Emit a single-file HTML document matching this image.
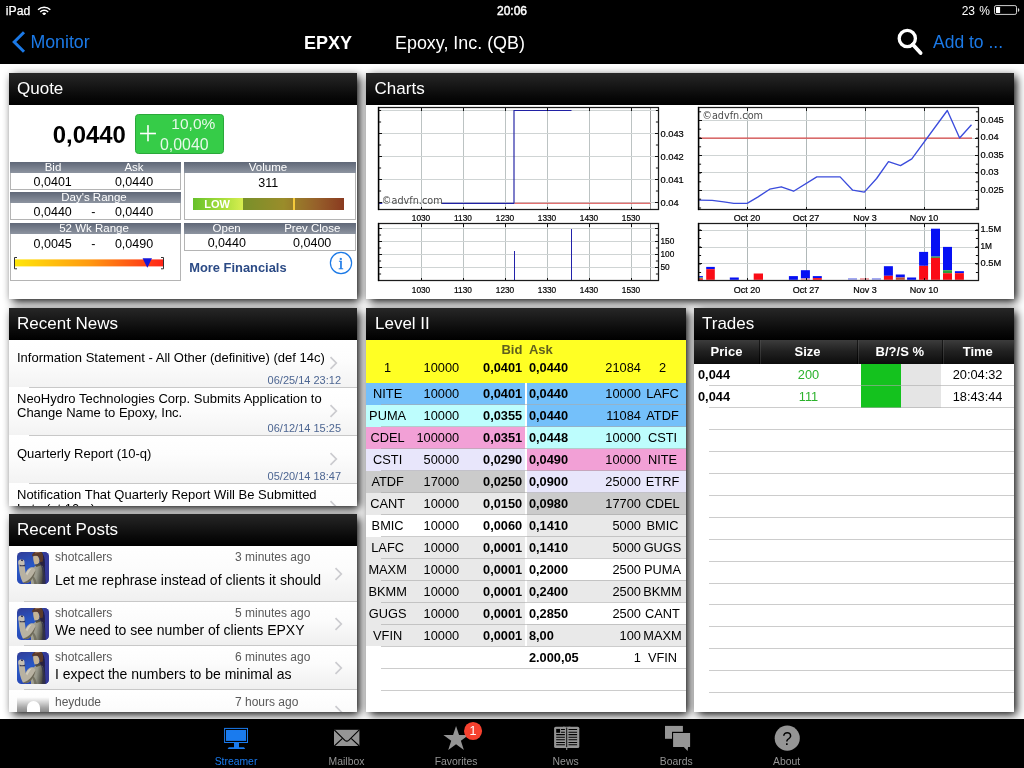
<!DOCTYPE html><html><head><meta charset="utf-8"><title>EPXY Streamer</title><style>
*{margin:0;padding:0;box-sizing:border-box}
html,body{width:1024px;height:768px;overflow:hidden;background:#fff}
body{position:relative;font-family:"Liberation Sans",sans-serif;font-size:13px;color:#000}
.t{position:absolute;white-space:nowrap}
.abs{position:absolute}
#wrap{position:absolute;left:0;top:0;width:1024px;height:768px;will-change:transform}
#top{position:absolute;left:0;top:0;width:1024px;height:64px;background:#000}
#tab{position:absolute;left:0;top:719px;width:1024px;height:49px;background:#000}
.panel{position:absolute;background:#fff;box-shadow:3.3px 3.3px 9px rgba(0,0,0,1);overflow:hidden}
.ph{position:absolute;left:0;top:0;right:0;height:32px;background:linear-gradient(#272727,#0a0a0a 70%,#000);color:#fff;font-size:17px;line-height:31px;padding-left:8px}
.gbar{position:absolute;height:11px;background:linear-gradient(#5f6777,#8d94a0)}
.vbox{position:absolute;border:1px solid #b4b4b4;border-top:none;background:#fff}
.row{position:absolute;left:0;right:0}
.sep{position:absolute;height:1px;background:#c8c8c8;right:0}
</style></head><body><div id="wrap">
<div id="top">
<div class="t" style="top:2.50px;line-height:16px;height:16px;font-size:12.2px;color:#fff;left:5.80px;-webkit-text-stroke:.25px #fff;">iPad</div>
<svg class="abs" style="left:36.8px;top:5.6px" width="14.4" height="9.9" viewBox="0 0 16 11"><g fill="none" stroke="#fff" stroke-width="1.6" stroke-linecap="butt"><path d="M1.2 4.2 A9.5 9.5 0 0 1 14.8 4.2"/><path d="M3.6 6.6 A6.2 6.2 0 0 1 12.4 6.6"/></g><path d="M8 10.6 L5.7 8.3 A3.2 3.2 0 0 1 10.3 8.3 Z" fill="#fff"/></svg>
<div class="t" style="top:2.50px;line-height:16px;height:16px;font-size:12px;color:#fff;left:312.00px;width:400px;text-align:center;-webkit-text-stroke:.45px #fff;">20:06</div>
<div class="t" style="top:2.50px;line-height:16px;height:16px;font-size:12px;color:#fff;left:590.00px;width:400px;text-align:right;word-spacing:1px;">23 %</div>
<svg class="abs" style="left:993px;top:4px" width="28" height="12" viewBox="0 0 28 12"><rect x="1.5" y="1.6" width="22" height="8.8" rx="1.6" fill="none" stroke="#d0d0d0" stroke-width="1"/><rect x="3" y="3" width="4.1" height="6" rx=".5" fill="#fff"/><path d="M24.9 4v4a2.1 2.1 0 0 0 0-4z" fill="#d8d8d8"/></svg>
<svg class="abs" style="left:11px;top:30px" width="16" height="24" viewBox="0 0 16 24"><path d="M13 2.2 L3.2 12 L13 21.8" fill="none" stroke="#1b79e6" stroke-width="3"/></svg>
<div class="t" style="top:31.10px;line-height:23px;height:23px;font-size:17.8px;color:#1b79e6;left:30.40px;">Monitor</div>
<div class="t" style="top:31.60px;line-height:23px;height:23px;font-size:18px;color:#fff;font-weight:bold;left:304.00px;">EPXY</div>
<div class="t" style="top:31.60px;line-height:23px;height:23px;font-size:17.9px;color:#fff;left:395.00px;">Epoxy, Inc. (QB)</div>
<svg class="abs" style="left:895px;top:27px" width="30" height="30" viewBox="0 0 30 30"><circle cx="12.3" cy="11.5" r="8.1" fill="none" stroke="#fff" stroke-width="3.3"/><path d="M17.8 17.5L25.6 26" stroke="#fff" stroke-width="3.8" stroke-linecap="round"/></svg>
<div class="t" style="top:31.10px;line-height:23px;height:23px;font-size:17.5px;color:#1b79e6;left:933.00px;">Add to ...</div>
</div>
<div class="panel" id="quote" style="left:9px;top:73px;width:348px;height:226px"><div class="ph">Quote</div>
<div class="t" style="top:45.70px;line-height:31px;height:31px;font-size:23.9px;color:#000;font-weight:bold;left:43.80px;">0,0440</div>
<div class="abs" style="left:126px;top:41px;width:89px;height:40px;background:#36cc48;border:1px solid #2aa83a;border-radius:3.5px"></div>
<div class="t" style="left:128.5px;top:45.3px;font-family:'DejaVu Sans Light','DejaVu Sans',sans-serif;font-weight:200;font-size:25px;line-height:30px;height:30px;color:#fff;-webkit-text-stroke:.3px #fff">+</div>
<div class="t" style="top:40.80px;line-height:20px;height:20px;font-size:15.5px;color:rgba(255,255,255,.88);left:-193.70px;width:400px;text-align:right;">10,0%</div>
<div class="t" style="top:60.90px;line-height:21px;height:21px;font-size:15.9px;color:rgba(255,255,255,.88);left:-200.40px;width:400px;text-align:right;">0,0040</div>
<div class="vbox" style="left:1px;top:99px;width:171px;height:18px"></div>
<div class="gbar" style="left:1px;top:89px;width:171px"></div>
<div class="vbox" style="left:1px;top:129px;width:171px;height:18px"></div>
<div class="gbar" style="left:1px;top:119px;width:171px"></div>
<div class="vbox" style="left:1px;top:160px;width:171px;height:48px"></div>
<div class="gbar" style="left:1px;top:150px;width:171px"></div>
<div class="vbox" style="left:175px;top:99px;width:172px;height:48px"></div>
<div class="gbar" style="left:175px;top:89px;width:172px"></div>
<div class="vbox" style="left:175px;top:160px;width:172px;height:18px"></div>
<div class="gbar" style="left:175px;top:150px;width:172px"></div>
<div class="t" style="top:86.80px;line-height:15px;height:15px;font-size:11.5px;color:#fff;left:-156.00px;width:400px;text-align:center;">Bid</div>
<div class="t" style="top:86.80px;line-height:15px;height:15px;font-size:11.5px;color:#fff;left:-75.00px;width:400px;text-align:center;">Ask</div>
<div class="t" style="top:116.80px;line-height:15px;height:15px;font-size:11.5px;color:#fff;left:-115.00px;width:400px;text-align:center;">Day's Range</div>
<div class="t" style="top:147.80px;line-height:15px;height:15px;font-size:11.5px;color:#fff;left:-115.00px;width:400px;text-align:center;">52 Wk Range</div>
<div class="t" style="top:86.80px;line-height:15px;height:15px;font-size:11.5px;color:#fff;left:59.00px;width:400px;text-align:center;">Volume</div>
<div class="t" style="top:147.80px;line-height:15px;height:15px;font-size:11.5px;color:#fff;left:17.70px;width:400px;text-align:center;">Open</div>
<div class="t" style="top:147.80px;line-height:15px;height:15px;font-size:11.5px;color:#fff;left:103.30px;width:400px;text-align:center;">Prev Close</div>
<div class="t" style="top:100.60px;line-height:16px;height:16px;font-size:12.5px;color:#000;left:-156.30px;width:400px;text-align:center;">0,0401</div>
<div class="t" style="top:100.60px;line-height:16px;height:16px;font-size:12.5px;color:#000;left:-75.00px;width:400px;text-align:center;">0,0440</div>
<div class="t" style="top:130.70px;line-height:16px;height:16px;font-size:12.5px;color:#000;left:-156.30px;width:400px;text-align:center;">0,0440</div>
<div class="t" style="top:130.70px;line-height:16px;height:16px;font-size:12.5px;color:#000;left:-115.60px;width:400px;text-align:center;">-</div>
<div class="t" style="top:130.70px;line-height:16px;height:16px;font-size:12.5px;color:#000;left:-75.00px;width:400px;text-align:center;">0,0440</div>
<div class="t" style="top:162.50px;line-height:16px;height:16px;font-size:12.5px;color:#000;left:-156.30px;width:400px;text-align:center;">0,0045</div>
<div class="t" style="top:162.50px;line-height:16px;height:16px;font-size:12.5px;color:#000;left:-115.60px;width:400px;text-align:center;">-</div>
<div class="t" style="top:162.50px;line-height:16px;height:16px;font-size:12.5px;color:#000;left:-75.00px;width:400px;text-align:center;">0,0490</div>
<div class="t" style="top:101.50px;line-height:16px;height:16px;font-size:12.5px;color:#000;left:59.30px;width:400px;text-align:center;">311</div>
<div class="t" style="top:161.80px;line-height:16px;height:16px;font-size:12.5px;color:#000;left:17.80px;width:400px;text-align:center;">0,0440</div>
<div class="t" style="top:161.80px;line-height:16px;height:16px;font-size:12.5px;color:#000;left:103.20px;width:400px;text-align:center;">0,0400</div>
<svg class="abs" style="left:3px;top:182px" width="156" height="16" viewBox="0 0 156 16"><defs><linearGradient id="rg" x1="0" x2="1" y1="0" y2="0"><stop offset="0" stop-color="#ffe60a"/><stop offset=".5" stop-color="#ff9a10"/><stop offset="1" stop-color="#ff2418"/></linearGradient></defs><rect x="2.5" y="4.4" width="149" height="7" fill="url(#rg)"/><path d="M5 2.5H2.5V13.8H5M149 2.5H151.5V13.8H149" fill="none" stroke="#333" stroke-width="1"/><path d="M130.6 3.2H140L135.3 12.8Z" fill="#1616d8"/></svg>
<div class="abs" style="left:184px;top:125px;width:151px;height:12px;background:linear-gradient(90deg,#6b8a22 0,#78902a 33%,#9a8c2a 60%,#96602a 82%,#8a3a20 100%)"></div>
<div class="abs" style="left:184px;top:125px;width:50px;height:12px;background:linear-gradient(90deg,#66c02a,#a8de3c 60%,#d8ee50)"></div>
<div class="abs" style="left:284px;top:125px;width:2px;height:12px;background:#f6cb3c"></div>
<div class="t" style="top:124.40px;line-height:14px;height:14px;font-size:11px;color:#fff;font-weight:bold;left:8.20px;width:400px;text-align:center;">LOW</div>
<div class="t" style="top:186.10px;line-height:17px;height:17px;font-size:12.9px;color:#2b4a85;font-weight:bold;left:180.20px;">More Financials</div>
<svg class="abs" style="left:320px;top:178px" width="24" height="24" viewBox="0 0 24 24"><circle cx="12" cy="12" r="10.6" fill="none" stroke="#1b79e6" stroke-width="1.2"/><text x="12" y="17.6" text-anchor="middle" font-family="Liberation Serif,serif" font-size="17.5" fill="#1b79e6" stroke="#1b79e6" stroke-width=".35">i</text></svg>
</div>
<div class="panel" id="charts" style="left:366px;top:73px;width:648px;height:226px"><div class="ph" style="padding-left:8.6px">Charts</div>
<svg class="abs" style="left:0;top:0" width="648" height="226" viewBox="366 73 648 226" font-family="Liberation Sans,sans-serif" font-size="10">
<g shape-rendering="crispEdges">
<path d="M421.5 107.5V209.5" stroke="#bcc3c3"/>
<path d="M463.5 107.5V209.5" stroke="#bcc3c3"/>
<path d="M505.5 107.5V209.5" stroke="#bcc3c3"/>
<path d="M547.5 107.5V209.5" stroke="#bcc3c3"/>
<path d="M589.5 107.5V209.5" stroke="#bcc3c3"/>
<path d="M631.5 107.5V209.5" stroke="#bcc3c3"/>
<path d="M650.5 107.5V209.5" stroke="#999"/>
<path d="M378.5 110.5H658.5" stroke="#cfd4d4"/>
<path d="M378.5 133.5H658.5" stroke="#cfd4d4"/>
<path d="M378.5 156.5H658.5" stroke="#cfd4d4"/>
<path d="M378.5 179.5H658.5" stroke="#cfd4d4"/>
<path d="M378.5 202.5H658.5" stroke="#cfd4d4"/>
</g>
<path d="M378.5 203.3H382.3" fill="none" stroke="#2222aa" stroke-width="1.2"/>
<path d="M442 203.3H514V110.5H571.5" fill="none" stroke="#2020a4" stroke-width="1.15"/>
<path d="M514.6 203.3H650.5" fill="none" stroke="#d84040" stroke-width="1.1"/>
<text x="381.8" y="204" font-family="DejaVu Sans,sans-serif" font-size="9.7" fill="#4c4c4c">©advfn.com</text>
<g shape-rendering="crispEdges">
<path d="M421.5 107.5v3M421.5 209.5v-3M463.5 107.5v3M463.5 209.5v-3M505.5 107.5v3M505.5 209.5v-3M547.5 107.5v3M547.5 209.5v-3M589.5 107.5v3M589.5 209.5v-3M631.5 107.5v3M631.5 209.5v-3M378.5 133.5h3.5M658.5 133.5h-3.5M378.5 156.5h3.5M658.5 156.5h-3.5M378.5 179.5h3.5M658.5 179.5h-3.5M378.5 202.5h3.5M658.5 202.5h-3.5" stroke="#111"/>
</g>
<path d="M378.5 110.5h2.6M658.5 110.5h-2.6M378.5 122.0h2.6M658.5 122.0h-2.6M378.5 133.5h2.6M658.5 133.5h-2.6M378.5 145.0h2.6M658.5 145.0h-2.6M378.5 156.5h2.6M658.5 156.5h-2.6M378.5 168.0h2.6M658.5 168.0h-2.6M378.5 179.5h2.6M658.5 179.5h-2.6M378.5 191.0h2.6M658.5 191.0h-2.6M378.5 202.5h2.6M658.5 202.5h-2.6" stroke="#111" stroke-width="1"/>
<rect x="378.5" y="107.5" width="280.0" height="102.0" fill="none" stroke="#1c1c1c" stroke-width="1.25"/>
<path d="M378.6 106.9V210.1" stroke="#000" stroke-width="1.4"/>
<text transform="translate(660.5 136.5) scale(0.98 1)" text-anchor="start" font-size="9.5" fill="#000" stroke="#000" stroke-width=".22">0.043</text>
<text transform="translate(660.5 159.5) scale(0.98 1)" text-anchor="start" font-size="9.5" fill="#000" stroke="#000" stroke-width=".22">0.042</text>
<text transform="translate(660.5 182.5) scale(0.98 1)" text-anchor="start" font-size="9.5" fill="#000" stroke="#000" stroke-width=".22">0.041</text>
<text transform="translate(660.5 205.5) scale(0.98 1)" text-anchor="start" font-size="9.5" fill="#000" stroke="#000" stroke-width=".22">0.04</text>
<text transform="translate(421.0 221.3) scale(0.875 1)" text-anchor="middle" font-size="9.5" fill="#000" stroke="#000" stroke-width=".22">1030</text>
<text transform="translate(463.0 221.3) scale(0.875 1)" text-anchor="middle" font-size="9.5" fill="#000" stroke="#000" stroke-width=".22">1130</text>
<text transform="translate(505.0 221.3) scale(0.875 1)" text-anchor="middle" font-size="9.5" fill="#000" stroke="#000" stroke-width=".22">1230</text>
<text transform="translate(547.0 221.3) scale(0.875 1)" text-anchor="middle" font-size="9.5" fill="#000" stroke="#000" stroke-width=".22">1330</text>
<text transform="translate(589.0 221.3) scale(0.875 1)" text-anchor="middle" font-size="9.5" fill="#000" stroke="#000" stroke-width=".22">1430</text>
<text transform="translate(631.0 221.3) scale(0.875 1)" text-anchor="middle" font-size="9.5" fill="#000" stroke="#000" stroke-width=".22">1530</text>
<g shape-rendering="crispEdges">
<path d="M421.5 223.5V280.5" stroke="#bcc3c3"/>
<path d="M463.5 223.5V280.5" stroke="#bcc3c3"/>
<path d="M505.5 223.5V280.5" stroke="#bcc3c3"/>
<path d="M547.5 223.5V280.5" stroke="#bcc3c3"/>
<path d="M589.5 223.5V280.5" stroke="#bcc3c3"/>
<path d="M631.5 223.5V280.5" stroke="#bcc3c3"/>
<path d="M650.5 223.5V280.5" stroke="#999"/>
<path d="M378.5 228.5H658.5" stroke="#cfd4d4"/>
<path d="M378.5 241.5H658.5" stroke="#cfd4d4"/>
<path d="M378.5 254.5H658.5" stroke="#cfd4d4"/>
<path d="M378.5 267.5H658.5" stroke="#cfd4d4"/>
<path d="M514.5 251V280.5M571.5 228.5V280.5" stroke="#2222aa" stroke-width="1.3"/>
</g>
<g shape-rendering="crispEdges">
<path d="M421.5 223.5v3M421.5 280.5v-3M463.5 223.5v3M463.5 280.5v-3M505.5 223.5v3M505.5 280.5v-3M547.5 223.5v3M547.5 280.5v-3M589.5 223.5v3M589.5 280.5v-3M631.5 223.5v3M631.5 280.5v-3M378.5 228.5h3.5M658.5 228.5h-3.5M378.5 241.5h3.5M658.5 241.5h-3.5M378.5 254.5h3.5M658.5 254.5h-3.5M378.5 267.5h3.5M658.5 267.5h-3.5" stroke="#111"/>
</g>
<path d="M378.5 228.5h2.6M658.5 228.5h-2.6M378.5 235.0h2.6M658.5 235.0h-2.6M378.5 241.5h2.6M658.5 241.5h-2.6M378.5 248.0h2.6M658.5 248.0h-2.6M378.5 254.5h2.6M658.5 254.5h-2.6M378.5 261.0h2.6M658.5 261.0h-2.6M378.5 267.5h2.6M658.5 267.5h-2.6M378.5 274.0h2.6M658.5 274.0h-2.6" stroke="#111" stroke-width="1"/>
<rect x="378.5" y="223.5" width="280.0" height="57.0" fill="none" stroke="#1c1c1c" stroke-width="1.25"/>
<path d="M378.6 222.9V281.1" stroke="#000" stroke-width="1.4"/>
<text transform="translate(660.5 243.6) scale(0.875 1)" text-anchor="start" font-size="9.5" fill="#000" stroke="#000" stroke-width=".22">150</text>
<text transform="translate(660.5 256.6) scale(0.875 1)" text-anchor="start" font-size="9.5" fill="#000" stroke="#000" stroke-width=".22">100</text>
<text transform="translate(660.5 269.6) scale(0.875 1)" text-anchor="start" font-size="9.5" fill="#000" stroke="#000" stroke-width=".22">50</text>
<text transform="translate(421.0 292.7) scale(0.875 1)" text-anchor="middle" font-size="9.5" fill="#000" stroke="#000" stroke-width=".22">1030</text>
<text transform="translate(463.0 292.7) scale(0.875 1)" text-anchor="middle" font-size="9.5" fill="#000" stroke="#000" stroke-width=".22">1130</text>
<text transform="translate(505.0 292.7) scale(0.875 1)" text-anchor="middle" font-size="9.5" fill="#000" stroke="#000" stroke-width=".22">1230</text>
<text transform="translate(547.0 292.7) scale(0.875 1)" text-anchor="middle" font-size="9.5" fill="#000" stroke="#000" stroke-width=".22">1330</text>
<text transform="translate(589.0 292.7) scale(0.875 1)" text-anchor="middle" font-size="9.5" fill="#000" stroke="#000" stroke-width=".22">1430</text>
<text transform="translate(631.0 292.7) scale(0.875 1)" text-anchor="middle" font-size="9.5" fill="#000" stroke="#000" stroke-width=".22">1530</text>
<g shape-rendering="crispEdges">
<path d="M747.5 107.5V209.5" stroke="#b0b8b8"/>
<path d="M806.5 107.5V209.5" stroke="#b0b8b8"/>
<path d="M865.5 107.5V209.5" stroke="#b0b8b8"/>
<path d="M924.5 107.5V209.5" stroke="#b0b8b8"/>
<path d="M698.5 120.5H978.5" stroke="#cfd4d4"/>
<path d="M698.5 138H978.5" stroke="#cfd4d4"/>
<path d="M698.5 155.5H978.5" stroke="#cfd4d4"/>
<path d="M698.5 172.5H978.5" stroke="#cfd4d4"/>
<path d="M698.5 190.5H978.5" stroke="#cfd4d4"/>
</g>
<path d="M698.5 138.1H972" stroke="#d84848" stroke-width="1.1"/>
<path d="M698.3 200.1L712.2 200.4L723.8 201.8L733.8 203.4L747.1 203.4L757.7 197.1L769.7 189.2L781.3 186.8L793.6 191.2L816.8 176.9L840.1 176.9L852.7 190.2L864.3 192.1L876.6 178.5L888.5 161.6L900.5 165.6L911.8 158.9L947.3 110.5L959.6 138.0L971.5 124.7" fill="none" stroke="#3b4cdc" stroke-width="1.35" stroke-linejoin="round"/>
<text x="702.2" y="119.2" font-family="DejaVu Sans,sans-serif" font-size="9.7" fill="#4c4c4c">©advfn.com</text>
<g shape-rendering="crispEdges">
<path d="M747.5 107.5v3M747.5 209.5v-3M806.5 107.5v3M806.5 209.5v-3M865.5 107.5v3M865.5 209.5v-3M924.5 107.5v3M924.5 209.5v-3M698.5 120.5h3.5M978.5 120.5h-3.5M698.5 138h3.5M978.5 138h-3.5M698.5 155.5h3.5M978.5 155.5h-3.5M698.5 172.5h3.5M978.5 172.5h-3.5M698.5 190.5h3.5M978.5 190.5h-3.5" stroke="#111"/>
</g>
<path d="M698.5 111.8h2.6M978.5 111.8h-2.6M698.5 120.5h2.6M978.5 120.5h-2.6M698.5 129.2h2.6M978.5 129.2h-2.6M698.5 138.0h2.6M978.5 138.0h-2.6M698.5 146.8h2.6M978.5 146.8h-2.6M698.5 155.5h2.6M978.5 155.5h-2.6M698.5 164.2h2.6M978.5 164.2h-2.6M698.5 173.0h2.6M978.5 173.0h-2.6M698.5 181.8h2.6M978.5 181.8h-2.6M698.5 190.5h2.6M978.5 190.5h-2.6M698.5 199.2h2.6M978.5 199.2h-2.6M698.5 208.0h2.6M978.5 208.0h-2.6" stroke="#111" stroke-width="1"/>
<rect x="698.5" y="107.5" width="280.0" height="102.0" fill="none" stroke="#1c1c1c" stroke-width="1.25"/>
<path d="M698.6 106.9V210.1" stroke="#000" stroke-width="1.4"/>
<text transform="translate(980.5 122.6) scale(0.98 1)" text-anchor="start" font-size="9.5" fill="#000" stroke="#000" stroke-width=".22">0.045</text>
<text transform="translate(980.5 140.1) scale(0.98 1)" text-anchor="start" font-size="9.5" fill="#000" stroke="#000" stroke-width=".22">0.04</text>
<text transform="translate(980.5 157.6) scale(0.98 1)" text-anchor="start" font-size="9.5" fill="#000" stroke="#000" stroke-width=".22">0.035</text>
<text transform="translate(980.5 174.6) scale(0.98 1)" text-anchor="start" font-size="9.5" fill="#000" stroke="#000" stroke-width=".22">0.03</text>
<text transform="translate(980.5 192.6) scale(0.98 1)" text-anchor="start" font-size="9.5" fill="#000" stroke="#000" stroke-width=".22">0.025</text>
<text transform="translate(747.0 221.3) scale(0.95 1)" text-anchor="middle" font-size="9.5" fill="#000" stroke="#000" stroke-width=".22">Oct 20</text>
<text transform="translate(806.0 221.3) scale(0.95 1)" text-anchor="middle" font-size="9.5" fill="#000" stroke="#000" stroke-width=".22">Oct 27</text>
<text transform="translate(865.0 221.3) scale(0.95 1)" text-anchor="middle" font-size="9.5" fill="#000" stroke="#000" stroke-width=".22">Nov 3</text>
<text transform="translate(924.0 221.3) scale(0.95 1)" text-anchor="middle" font-size="9.5" fill="#000" stroke="#000" stroke-width=".22">Nov 10</text>
<g shape-rendering="crispEdges">
<path d="M747.5 223.5V280.5" stroke="#b0b8b8"/>
<path d="M806.5 223.5V280.5" stroke="#b0b8b8"/>
<path d="M865.5 223.5V280.5" stroke="#b0b8b8"/>
<path d="M924.5 223.5V280.5" stroke="#b0b8b8"/>
<path d="M698.5 230H978.5" stroke="#cfd4d4"/>
<path d="M698.5 247H978.5" stroke="#cfd4d4"/>
<path d="M698.5 263.5H978.5" stroke="#cfd4d4"/>
</g>
<rect x="698.3" y="276.1" width="4.6" height="1.3" fill="#0610f4"/>
<rect x="698.3" y="277.5" width="4.6" height="1.0" fill="#28a040"/>
<rect x="698.3" y="278.5" width="4.6" height="1.3" fill="#fa0c16"/>
<rect x="706.2" y="266.9" width="8.6" height="2.3" fill="#0610f4"/>
<rect x="706.2" y="269.2" width="8.6" height="10.6" fill="#fa0c16"/>
<rect x="729.8" y="277.5" width="9.0" height="2.3" fill="#0610f4"/>
<rect x="753.7" y="273.5" width="9.3" height="6.3" fill="#fa0c16"/>
<rect x="788.9" y="276.1" width="9.0" height="3.7" fill="#0610f4"/>
<rect x="800.9" y="270.2" width="9.0" height="8.3" fill="#0610f4"/>
<rect x="800.9" y="278.5" width="9.0" height="1.3" fill="#f09aa0"/>
<rect x="812.8" y="276.1" width="9.0" height="2.0" fill="#0610f4"/>
<rect x="812.8" y="278.1" width="9.0" height="1.7" fill="#fa0c16"/>
<rect x="848.0" y="278.1" width="9.0" height="1.7" fill="#9aa0f0"/>
<rect x="860.0" y="278.1" width="9.0" height="1.7" fill="#f09aa0"/>
<rect x="871.9" y="278.1" width="9.0" height="1.7" fill="#9aa0f0"/>
<rect x="883.9" y="266.2" width="9.0" height="9.6" fill="#0610f4"/>
<rect x="883.9" y="275.8" width="9.0" height="4.0" fill="#fa0c16"/>
<rect x="895.8" y="274.5" width="9.0" height="3.0" fill="#0610f4"/>
<rect x="895.8" y="277.5" width="9.0" height="2.3" fill="#c05030"/>
<rect x="907.1" y="277.5" width="9.0" height="2.3" fill="#0610f4"/>
<rect x="919.1" y="251.9" width="9.0" height="13.9" fill="#0610f4"/>
<rect x="919.1" y="265.9" width="9.0" height="13.9" fill="#fa0c16"/>
<rect x="931.0" y="228.7" width="9.0" height="27.9" fill="#0610f4"/>
<rect x="931.0" y="256.6" width="9.0" height="1.3" fill="#28a040"/>
<rect x="931.0" y="257.9" width="9.0" height="21.9" fill="#fa0c16"/>
<rect x="943.0" y="246.9" width="9.0" height="23.2" fill="#0610f4"/>
<rect x="943.0" y="270.2" width="9.0" height="3.0" fill="#28a040"/>
<rect x="943.0" y="273.2" width="9.0" height="6.6" fill="#fa0c16"/>
<rect x="954.9" y="271.2" width="9.0" height="2.0" fill="#0610f4"/>
<rect x="954.9" y="273.2" width="9.0" height="6.6" fill="#fa0c16"/>
<g shape-rendering="crispEdges">
<path d="M747.5 223.5v3M747.5 280.5v-3M806.5 223.5v3M806.5 280.5v-3M865.5 223.5v3M865.5 280.5v-3M924.5 223.5v3M924.5 280.5v-3M698.5 230h3.5M978.5 230h-3.5M698.5 247h3.5M978.5 247h-3.5M698.5 263.5h3.5M978.5 263.5h-3.5" stroke="#111"/>
</g>
<path d="M698.5 230.0h2.6M978.5 230.0h-2.6M698.5 238.5h2.6M978.5 238.5h-2.6M698.5 247.0h2.6M978.5 247.0h-2.6M698.5 255.5h2.6M978.5 255.5h-2.6M698.5 264.0h2.6M978.5 264.0h-2.6M698.5 272.5h2.6M978.5 272.5h-2.6" stroke="#111" stroke-width="1"/>
<rect x="698.5" y="223.5" width="280.0" height="57.0" fill="none" stroke="#1c1c1c" stroke-width="1.25"/>
<path d="M698.6 222.9V281.1" stroke="#000" stroke-width="1.4"/>
<text transform="translate(980.5 232.1) scale(0.98 1)" text-anchor="start" font-size="9.5" fill="#000" stroke="#000" stroke-width=".22">1.5M</text>
<text transform="translate(980.5 249.1) scale(0.875 1)" text-anchor="start" font-size="9.5" fill="#000" stroke="#000" stroke-width=".22">1M</text>
<text transform="translate(980.5 265.6) scale(0.98 1)" text-anchor="start" font-size="9.5" fill="#000" stroke="#000" stroke-width=".22">0.5M</text>
<text transform="translate(747.0 292.7) scale(0.95 1)" text-anchor="middle" font-size="9.5" fill="#000" stroke="#000" stroke-width=".22">Oct 20</text>
<text transform="translate(806.0 292.7) scale(0.95 1)" text-anchor="middle" font-size="9.5" fill="#000" stroke="#000" stroke-width=".22">Oct 27</text>
<text transform="translate(865.0 292.7) scale(0.95 1)" text-anchor="middle" font-size="9.5" fill="#000" stroke="#000" stroke-width=".22">Nov 3</text>
<text transform="translate(924.0 292.7) scale(0.95 1)" text-anchor="middle" font-size="9.5" fill="#000" stroke="#000" stroke-width=".22">Nov 10</text>
</svg>
</div>
<div class="panel" id="news" style="left:9px;top:308px;width:348px;height:198px"><div class="ph">Recent News</div>
<div class="row" style="top:31.5px;height:47.8px;background:linear-gradient(#fff,#fdfdfd 40%,#f3f3f3)"></div>
<svg class="abs" style="left:319.6px;top:48.4px" width="9" height="14" viewBox="0 0 9 14"><path d="M1.5 1.2L7.3 7L1.5 12.8" fill="none" stroke="#cbcbcf" stroke-width="1.7"/></svg>
<div class="row" style="top:79.3px;height:48.1px;background:linear-gradient(#fff,#fdfdfd 40%,#f3f3f3)"></div>
<svg class="abs" style="left:319.6px;top:96.2px" width="9" height="14" viewBox="0 0 9 14"><path d="M1.5 1.2L7.3 7L1.5 12.8" fill="none" stroke="#cbcbcf" stroke-width="1.7"/></svg>
<div class="row" style="top:127.4px;height:48.1px;background:linear-gradient(#fff,#fdfdfd 40%,#f3f3f3)"></div>
<svg class="abs" style="left:319.6px;top:144.3px" width="9" height="14" viewBox="0 0 9 14"><path d="M1.5 1.2L7.3 7L1.5 12.8" fill="none" stroke="#cbcbcf" stroke-width="1.7"/></svg>
<div class="row" style="top:175.5px;height:48.1px;background:linear-gradient(#fff,#fdfdfd 40%,#f3f3f3)"></div>
<svg class="abs" style="left:319.6px;top:192.4px" width="9" height="14" viewBox="0 0 9 14"><path d="M1.5 1.2L7.3 7L1.5 12.8" fill="none" stroke="#cbcbcf" stroke-width="1.7"/></svg>
<div class="sep" style="left:20px;top:78.7px"></div>
<div class="sep" style="left:20px;top:126.8px"></div>
<div class="sep" style="left:20px;top:174.9px"></div>
<div class="sep" style="left:20px;top:223.0px"></div>
<div class="t" style="top:40.80px;line-height:17px;height:17px;font-size:13px;color:#000;left:8.00px;">Information Statement - All Other (definitive) (def 14c)</div>
<div class="t" style="top:65.20px;line-height:14px;height:14px;font-size:11px;color:#4d6692;left:-68.00px;width:400px;text-align:right;">06/25/14 23:12</div>
<div class="t" style="top:81.70px;line-height:17px;height:17px;font-size:13px;color:#000;left:8.00px;">NeoHydro Technologies Corp. Submits Application to</div>
<div class="t" style="top:95.80px;line-height:17px;height:17px;font-size:13px;color:#000;left:8.00px;">Change Name to Epoxy, Inc.</div>
<div class="t" style="top:113.20px;line-height:14px;height:14px;font-size:11px;color:#4d6692;left:-68.00px;width:400px;text-align:right;">06/12/14 15:25</div>
<div class="t" style="top:137.00px;line-height:17px;height:17px;font-size:13px;color:#000;left:8.00px;">Quarterly Report (10-q)</div>
<div class="t" style="top:161.20px;line-height:14px;height:14px;font-size:11px;color:#4d6692;left:-68.00px;width:400px;text-align:right;">05/20/14 18:47</div>
<div class="t" style="top:178.00px;line-height:17px;height:17px;font-size:13px;color:#000;left:8.00px;">Notification That Quarterly Report Will Be Submitted</div>
<div class="t" style="top:192.20px;line-height:17px;height:17px;font-size:13px;color:#000;left:8.00px;">Late (nt 10-q)</div>
</div>
<div class="panel" id="posts" style="left:9px;top:514px;width:348px;height:198px"><div class="ph">Recent Posts</div>
<div class="row" style="top:31.8px;height:56.2px;background:linear-gradient(#fff,#fcfcfc 40%,#efefef)"></div>
<div class="row" style="top:88.0px;height:44.0px;background:linear-gradient(#fff,#fcfcfc 40%,#efefef)"></div>
<div class="row" style="top:132.0px;height:44.0px;background:linear-gradient(#fff,#fcfcfc 40%,#efefef)"></div>
<div class="row" style="top:176.0px;height:44.0px;background:linear-gradient(#fff,#fcfcfc 40%,#efefef)"></div>
<div class="sep" style="left:15px;top:87.4px"></div>
<div class="sep" style="left:15px;top:131.4px"></div>
<div class="sep" style="left:15px;top:175.4px"></div>
<div class="sep" style="left:15px;top:219.4px"></div>
<svg width="0" height="0" style="position:absolute"><defs><linearGradient id="avbg" x1="0" y1="0" x2="0.35" y2="1"><stop offset="0" stop-color="#303c96"/><stop offset=".5" stop-color="#2858c6"/><stop offset="1" stop-color="#2846b4"/></linearGradient><linearGradient id="avsk" x1="0" y1="0" x2="1" y2="0.2"><stop offset="0" stop-color="#b6b2a2"/><stop offset=".6" stop-color="#98988a"/><stop offset="1" stop-color="#46463e"/></linearGradient><clipPath id="avc"><rect width="32" height="32" rx="4.6"/></clipPath><filter id="avf" x="-5%" y="-5%" width="110%" height="110%"><feGaussianBlur stdDeviation="0.6"/></filter><g id="avg"><g clip-path="url(#avc)"><rect width="32" height="32" fill="url(#avbg)"/><g filter="url(#avf)"><path d="M26.5 0H32V32H27.5Z" fill="#38348e" opacity=".8"/><path d="M24.5 0C27.4 3 28.4 8 27.8 14L28.6 32H26L25.4 13C26 9 25.6 4 24.5 0Z" fill="#22204c"/><path d="M15.9 16C17.5 14 20 12.8 22.5 12.4L25 13C27 15 27.8 20 27.5 32H14C14.4 28.5 13 25 11 22.5Z" fill="url(#avsk)"/><path d="M24 13C27 15 27.9 20 27.6 32H25.2C26 24 25.6 17 24 13Z" fill="#30304a" opacity=".85"/><path d="M17.2 32C17 28 15 25 12.5 23.5L14 22C17 24 19.5 28 19.8 32Z" fill="#5c5848" opacity=".6"/><path d="M16.4 15.4C13.4 15 10 16.8 8.7 21.2L7.7 14L1.7 13.8C2 20 3.4 26 5.8 30.6C8.4 31.8 11.5 31 14 28.4C16.4 25.6 18.2 21.5 18.6 18Z" fill="#b8b2a2"/><path d="M5.8 30.6C8.4 31.8 11.5 31 14 28.4C16.4 25.6 18.2 21.5 18.6 18C16.6 22.6 13.6 26.6 10.6 28.6C9 29.6 7.2 30.4 5.8 30.6Z" fill="#4c4838" opacity=".7"/><path d="M8.9 21.6C9.8 19 12 16.8 14.8 16.4C13 18.4 11.2 21 10.2 23.6Z" fill="#e4dfd2" opacity=".6"/><path d="M1.2 9.4C1.6 7.9 3.2 7.4 5 7.6C6.8 7.8 7.6 8.8 7.5 10.2L7.6 13.8L1.8 13.8C1.2 12.2 1 10.8 1.2 9.4Z" fill="#c4bfb2"/><path d="M4 7.6L6 7.8L5.8 9.2L4 8.8Z" fill="#2a2a48"/><path d="M2.6 12.4C4.5 13.5 6.5 13.5 8.3 12.6L8.1 14.2L2.9 14.2Z" fill="#2c2c46" opacity=".9"/><path d="M16.1 5C16.3 3.6 18.5 3.2 20.3 3.8C21.5 4.5 22.4 7 22.6 10C21.5 12 19.5 12.9 17.6 12.4C16.8 10 16.2 8 16.1 5Z" fill="#c6b494"/><path d="M18 12.4C20 13 22 11.8 22.7 10L24.4 13.2L19.4 15Z" fill="#48422f" opacity=".8"/><path d="M22.4 9.4L26 7.6L28 14.4L24 13.6Z" fill="#2a2440"/><path d="M15.2 4.6C14.9 1.5 17 0 20 -0.4H24.6C26.2 2 26.4 6 25.8 9.4L22.8 10.2C22.9 7 22 4.6 20.5 3.9C18.5 3.4 16.4 3.9 15.2 4.6Z" fill="#5c3a2a"/><path d="M18 0.4C20 -0.2 22.6 0 23.6 1.4C21.6 0.9 19.6 0.9 18 1.6Z" fill="#96705a" opacity=".8"/></g></g></g></defs></svg>
<svg class="abs" style="left:7.899999999999999px;top:37.89999999999998px" width="32" height="32" viewBox="0 0 32 32"><use href="#avg"/></svg>
<svg class="abs" style="left:7.899999999999999px;top:93.79999999999995px" width="32" height="32" viewBox="0 0 32 32"><use href="#avg"/></svg>
<svg class="abs" style="left:7.899999999999999px;top:137.89999999999998px" width="32" height="32" viewBox="0 0 32 32"><use href="#avg"/></svg>
<div class="abs" style="left:8.100000000000001px;top:182.5px;width:31.6px;height:32px;background:linear-gradient(#fff 0,#d0d0d0 18%,#a4a4a4 34%,#858585 50%);overflow:hidden"><div class="abs" style="left:10px;top:4px;width:13.2px;height:30px;border-radius:6.6px 6.6px 0 0;background:#fff"></div></div>
<div class="t" style="top:35.30px;line-height:16px;height:16px;font-size:12px;color:#595959;left:46.00px;">shotcallers</div>
<div class="t" style="top:35.30px;line-height:16px;height:16px;font-size:12px;color:#595959;left:226.00px;">3 minutes ago</div>
<div class="t" style="top:57.20px;line-height:18px;height:18px;font-size:14px;color:#000;left:46.00px;">Let me rephrase instead of clients it should</div>
<svg class="abs" style="left:325.4px;top:52.700000000000045px" width="9" height="14" viewBox="0 0 9 14"><path d="M1.5 1.2L7.3 7L1.5 12.8" fill="none" stroke="#cbcbcf" stroke-width="1.7"/></svg>
<div class="t" style="top:91.30px;line-height:16px;height:16px;font-size:12px;color:#595959;left:46.00px;">shotcallers</div>
<div class="t" style="top:91.30px;line-height:16px;height:16px;font-size:12px;color:#595959;left:226.00px;">5 minutes ago</div>
<div class="t" style="top:107.20px;line-height:18px;height:18px;font-size:14px;color:#000;left:46.00px;">We need to see number of clients EPXY</div>
<svg class="abs" style="left:325.4px;top:102.79999999999995px" width="9" height="14" viewBox="0 0 9 14"><path d="M1.5 1.2L7.3 7L1.5 12.8" fill="none" stroke="#cbcbcf" stroke-width="1.7"/></svg>
<div class="t" style="top:135.30px;line-height:16px;height:16px;font-size:12px;color:#595959;left:46.00px;">shotcallers</div>
<div class="t" style="top:135.30px;line-height:16px;height:16px;font-size:12px;color:#595959;left:226.00px;">6 minutes ago</div>
<div class="t" style="top:151.20px;line-height:18px;height:18px;font-size:14px;color:#000;left:46.00px;">I expect the numbers to be minimal as</div>
<svg class="abs" style="left:325.4px;top:146.79999999999995px" width="9" height="14" viewBox="0 0 9 14"><path d="M1.5 1.2L7.3 7L1.5 12.8" fill="none" stroke="#cbcbcf" stroke-width="1.7"/></svg>
<div class="t" style="top:179.60px;line-height:16px;height:16px;font-size:12px;color:#595959;left:46.00px;">heydude</div>
<div class="t" style="top:179.60px;line-height:16px;height:16px;font-size:12px;color:#595959;left:226.00px;">7 hours ago</div>
<svg class="abs" style="left:325.4px;top:190.79999999999995px" width="9" height="14" viewBox="0 0 9 14"><path d="M1.5 1.2L7.3 7L1.5 12.8" fill="none" stroke="#cbcbcf" stroke-width="1.7"/></svg>
</div>
<div class="panel" id="l2" style="left:366px;top:308px;width:320px;height:404px"><div class="ph" style="padding-left:9px">Level II</div>
<div class="abs" style="left:0;top:31.8px;width:320px;height:43.4px;background:#ffff24"></div>
<div class="t" style="top:33.00px;line-height:17px;height:17px;font-size:13px;color:#5f5f1e;font-weight:bold;left:-243.60px;width:400px;text-align:right;">Bid</div>
<div class="t" style="top:33.00px;line-height:17px;height:17px;font-size:13px;color:#5f5f1e;font-weight:bold;left:162.90px;">Ask</div>
<div class="t" style="top:50.90px;line-height:17px;height:17px;font-size:12.8px;color:#000;left:-178.40px;width:400px;text-align:center;">1</div>
<div class="t" style="top:50.90px;line-height:17px;height:17px;font-size:12.8px;color:#000;left:-306.80px;width:400px;text-align:right;">10000</div>
<div class="t" style="top:50.90px;line-height:17px;height:17px;font-size:12.8px;color:#000;font-weight:bold;left:-243.80px;width:400px;text-align:right;">0,0401</div>
<div class="t" style="top:50.90px;line-height:17px;height:17px;font-size:12.8px;color:#000;font-weight:bold;left:162.90px;">0,0440</div>
<div class="t" style="top:50.90px;line-height:17px;height:17px;font-size:12.8px;color:#000;left:-125.10px;width:400px;text-align:right;">21084</div>
<div class="t" style="top:50.90px;line-height:17px;height:17px;font-size:12.8px;color:#000;left:96.50px;width:400px;text-align:center;">2</div>
<div class="abs" style="left:0;top:75.00px;width:159px;height:22.23px;background:#74c0fa"></div>
<div class="t" style="top:77.27px;line-height:17px;height:17px;font-size:12.8px;color:#000;left:-178.40px;width:400px;text-align:center;">NITE</div>
<div class="t" style="top:77.27px;line-height:17px;height:17px;font-size:12.8px;color:#000;left:-306.80px;width:400px;text-align:right;">10000</div>
<div class="t" style="top:77.27px;line-height:17px;height:17px;font-size:12.8px;color:#000;font-weight:bold;left:-243.80px;width:400px;text-align:right;">0,0401</div>
<div class="abs" style="left:161px;top:75.00px;width:159px;height:22.23px;background:#74c0fa"></div>
<div class="t" style="top:77.27px;line-height:17px;height:17px;font-size:12.8px;color:#000;font-weight:bold;left:162.90px;">0,0440</div>
<div class="t" style="top:77.27px;line-height:17px;height:17px;font-size:12.8px;color:#000;left:-125.10px;width:400px;text-align:right;">10000</div>
<div class="t" style="top:77.27px;line-height:17px;height:17px;font-size:12.8px;color:#000;left:96.50px;width:400px;text-align:center;">LAFC</div>
<div class="abs" style="left:0;top:96.93px;width:159px;height:22.23px;background:#bdfdfd"></div>
<div class="t" style="top:99.25px;line-height:17px;height:17px;font-size:12.8px;color:#000;left:-178.40px;width:400px;text-align:center;">PUMA</div>
<div class="t" style="top:99.25px;line-height:17px;height:17px;font-size:12.8px;color:#000;left:-306.80px;width:400px;text-align:right;">10000</div>
<div class="t" style="top:99.25px;line-height:17px;height:17px;font-size:12.8px;color:#000;font-weight:bold;left:-243.80px;width:400px;text-align:right;">0,0355</div>
<div class="abs" style="left:161px;top:96.93px;width:159px;height:22.23px;background:#74c0fa"></div>
<div class="t" style="top:99.25px;line-height:17px;height:17px;font-size:12.8px;color:#000;font-weight:bold;left:162.90px;">0,0440</div>
<div class="t" style="top:99.25px;line-height:17px;height:17px;font-size:12.8px;color:#000;left:-125.10px;width:400px;text-align:right;">11084</div>
<div class="t" style="top:99.25px;line-height:17px;height:17px;font-size:12.8px;color:#000;left:96.50px;width:400px;text-align:center;">ATDF</div>
<div class="abs" style="left:0;top:118.86px;width:159px;height:22.23px;background:#f2a0d6"></div>
<div class="t" style="top:121.23px;line-height:17px;height:17px;font-size:12.8px;color:#000;left:-178.40px;width:400px;text-align:center;">CDEL</div>
<div class="t" style="top:121.23px;line-height:17px;height:17px;font-size:12.8px;color:#000;left:-306.80px;width:400px;text-align:right;">100000</div>
<div class="t" style="top:121.23px;line-height:17px;height:17px;font-size:12.8px;color:#000;font-weight:bold;left:-243.80px;width:400px;text-align:right;">0,0351</div>
<div class="abs" style="left:161px;top:118.86px;width:159px;height:22.23px;background:#bdfdfd"></div>
<div class="t" style="top:121.23px;line-height:17px;height:17px;font-size:12.8px;color:#000;font-weight:bold;left:162.90px;">0,0448</div>
<div class="t" style="top:121.23px;line-height:17px;height:17px;font-size:12.8px;color:#000;left:-125.10px;width:400px;text-align:right;">10000</div>
<div class="t" style="top:121.23px;line-height:17px;height:17px;font-size:12.8px;color:#000;left:96.50px;width:400px;text-align:center;">CSTI</div>
<div class="abs" style="left:0;top:140.79px;width:159px;height:22.23px;background:#e8e6fb"></div>
<div class="t" style="top:143.20px;line-height:17px;height:17px;font-size:12.8px;color:#000;left:-178.40px;width:400px;text-align:center;">CSTI</div>
<div class="t" style="top:143.20px;line-height:17px;height:17px;font-size:12.8px;color:#000;left:-306.80px;width:400px;text-align:right;">50000</div>
<div class="t" style="top:143.20px;line-height:17px;height:17px;font-size:12.8px;color:#000;font-weight:bold;left:-243.80px;width:400px;text-align:right;">0,0290</div>
<div class="abs" style="left:161px;top:140.79px;width:159px;height:22.23px;background:#f2a0d6"></div>
<div class="t" style="top:143.20px;line-height:17px;height:17px;font-size:12.8px;color:#000;font-weight:bold;left:162.90px;">0,0490</div>
<div class="t" style="top:143.20px;line-height:17px;height:17px;font-size:12.8px;color:#000;left:-125.10px;width:400px;text-align:right;">10000</div>
<div class="t" style="top:143.20px;line-height:17px;height:17px;font-size:12.8px;color:#000;left:96.50px;width:400px;text-align:center;">NITE</div>
<div class="abs" style="left:0;top:162.72px;width:159px;height:22.23px;background:#cbcbcb"></div>
<div class="t" style="top:165.19px;line-height:17px;height:17px;font-size:12.8px;color:#000;left:-178.40px;width:400px;text-align:center;">ATDF</div>
<div class="t" style="top:165.19px;line-height:17px;height:17px;font-size:12.8px;color:#000;left:-306.80px;width:400px;text-align:right;">17000</div>
<div class="t" style="top:165.19px;line-height:17px;height:17px;font-size:12.8px;color:#000;font-weight:bold;left:-243.80px;width:400px;text-align:right;">0,0250</div>
<div class="abs" style="left:161px;top:162.72px;width:159px;height:22.23px;background:#e8e6fb"></div>
<div class="t" style="top:165.19px;line-height:17px;height:17px;font-size:12.8px;color:#000;font-weight:bold;left:162.90px;">0,0900</div>
<div class="t" style="top:165.19px;line-height:17px;height:17px;font-size:12.8px;color:#000;left:-125.10px;width:400px;text-align:right;">25000</div>
<div class="t" style="top:165.19px;line-height:17px;height:17px;font-size:12.8px;color:#000;left:96.50px;width:400px;text-align:center;">ETRF</div>
<div class="abs" style="left:0;top:184.65px;width:159px;height:22.23px;background:#e9e9e9"></div>
<div class="t" style="top:187.16px;line-height:17px;height:17px;font-size:12.8px;color:#000;left:-178.40px;width:400px;text-align:center;">CANT</div>
<div class="t" style="top:187.16px;line-height:17px;height:17px;font-size:12.8px;color:#000;left:-306.80px;width:400px;text-align:right;">10000</div>
<div class="t" style="top:187.16px;line-height:17px;height:17px;font-size:12.8px;color:#000;font-weight:bold;left:-243.80px;width:400px;text-align:right;">0,0150</div>
<div class="abs" style="left:161px;top:184.65px;width:159px;height:22.23px;background:#cbcbcb"></div>
<div class="t" style="top:187.16px;line-height:17px;height:17px;font-size:12.8px;color:#000;font-weight:bold;left:162.90px;">0,0980</div>
<div class="t" style="top:187.16px;line-height:17px;height:17px;font-size:12.8px;color:#000;left:-125.10px;width:400px;text-align:right;">17700</div>
<div class="t" style="top:187.16px;line-height:17px;height:17px;font-size:12.8px;color:#000;left:96.50px;width:400px;text-align:center;">CDEL</div>
<div class="abs" style="left:0;top:206.58px;width:159px;height:22.23px;background:#ffffff"></div>
<div class="t" style="top:209.14px;line-height:17px;height:17px;font-size:12.8px;color:#000;left:-178.40px;width:400px;text-align:center;">BMIC</div>
<div class="t" style="top:209.14px;line-height:17px;height:17px;font-size:12.8px;color:#000;left:-306.80px;width:400px;text-align:right;">10000</div>
<div class="t" style="top:209.14px;line-height:17px;height:17px;font-size:12.8px;color:#000;font-weight:bold;left:-243.80px;width:400px;text-align:right;">0,0060</div>
<div class="abs" style="left:161px;top:206.58px;width:159px;height:22.23px;background:#e9e9e9"></div>
<div class="t" style="top:209.14px;line-height:17px;height:17px;font-size:12.8px;color:#000;font-weight:bold;left:162.90px;">0,1410</div>
<div class="t" style="top:209.14px;line-height:17px;height:17px;font-size:12.8px;color:#000;left:-125.10px;width:400px;text-align:right;">5000</div>
<div class="t" style="top:209.14px;line-height:17px;height:17px;font-size:12.8px;color:#000;left:96.50px;width:400px;text-align:center;">BMIC</div>
<div class="abs" style="left:0;top:228.51px;width:159px;height:22.23px;background:#e9e9e9"></div>
<div class="t" style="top:231.12px;line-height:17px;height:17px;font-size:12.8px;color:#000;left:-178.40px;width:400px;text-align:center;">LAFC</div>
<div class="t" style="top:231.12px;line-height:17px;height:17px;font-size:12.8px;color:#000;left:-306.80px;width:400px;text-align:right;">10000</div>
<div class="t" style="top:231.12px;line-height:17px;height:17px;font-size:12.8px;color:#000;font-weight:bold;left:-243.80px;width:400px;text-align:right;">0,0001</div>
<div class="abs" style="left:161px;top:228.51px;width:159px;height:22.23px;background:#e9e9e9"></div>
<div class="t" style="top:231.12px;line-height:17px;height:17px;font-size:12.8px;color:#000;font-weight:bold;left:162.90px;">0,1410</div>
<div class="t" style="top:231.12px;line-height:17px;height:17px;font-size:12.8px;color:#000;left:-125.10px;width:400px;text-align:right;">5000</div>
<div class="t" style="top:231.12px;line-height:17px;height:17px;font-size:12.8px;color:#000;left:96.50px;width:400px;text-align:center;">GUGS</div>
<div class="abs" style="left:0;top:250.44px;width:159px;height:22.23px;background:#e9e9e9"></div>
<div class="t" style="top:253.10px;line-height:17px;height:17px;font-size:12.8px;color:#000;left:-178.40px;width:400px;text-align:center;">MAXM</div>
<div class="t" style="top:253.10px;line-height:17px;height:17px;font-size:12.8px;color:#000;left:-306.80px;width:400px;text-align:right;">10000</div>
<div class="t" style="top:253.10px;line-height:17px;height:17px;font-size:12.8px;color:#000;font-weight:bold;left:-243.80px;width:400px;text-align:right;">0,0001</div>
<div class="abs" style="left:161px;top:250.44px;width:159px;height:22.23px;background:#ffffff"></div>
<div class="t" style="top:253.10px;line-height:17px;height:17px;font-size:12.8px;color:#000;font-weight:bold;left:162.90px;">0,2000</div>
<div class="t" style="top:253.10px;line-height:17px;height:17px;font-size:12.8px;color:#000;left:-125.10px;width:400px;text-align:right;">2500</div>
<div class="t" style="top:253.10px;line-height:17px;height:17px;font-size:12.8px;color:#000;left:96.50px;width:400px;text-align:center;">PUMA</div>
<div class="abs" style="left:0;top:272.37px;width:159px;height:22.23px;background:#e9e9e9"></div>
<div class="t" style="top:275.09px;line-height:17px;height:17px;font-size:12.8px;color:#000;left:-178.40px;width:400px;text-align:center;">BKMM</div>
<div class="t" style="top:275.09px;line-height:17px;height:17px;font-size:12.8px;color:#000;left:-306.80px;width:400px;text-align:right;">10000</div>
<div class="t" style="top:275.09px;line-height:17px;height:17px;font-size:12.8px;color:#000;font-weight:bold;left:-243.80px;width:400px;text-align:right;">0,0001</div>
<div class="abs" style="left:161px;top:272.37px;width:159px;height:22.23px;background:#e9e9e9"></div>
<div class="t" style="top:275.09px;line-height:17px;height:17px;font-size:12.8px;color:#000;font-weight:bold;left:162.90px;">0,2400</div>
<div class="t" style="top:275.09px;line-height:17px;height:17px;font-size:12.8px;color:#000;left:-125.10px;width:400px;text-align:right;">2500</div>
<div class="t" style="top:275.09px;line-height:17px;height:17px;font-size:12.8px;color:#000;left:96.50px;width:400px;text-align:center;">BKMM</div>
<div class="abs" style="left:0;top:294.30px;width:159px;height:22.23px;background:#e9e9e9"></div>
<div class="t" style="top:297.06px;line-height:17px;height:17px;font-size:12.8px;color:#000;left:-178.40px;width:400px;text-align:center;">GUGS</div>
<div class="t" style="top:297.06px;line-height:17px;height:17px;font-size:12.8px;color:#000;left:-306.80px;width:400px;text-align:right;">10000</div>
<div class="t" style="top:297.06px;line-height:17px;height:17px;font-size:12.8px;color:#000;font-weight:bold;left:-243.80px;width:400px;text-align:right;">0,0001</div>
<div class="abs" style="left:161px;top:294.30px;width:159px;height:22.23px;background:#ffffff"></div>
<div class="t" style="top:297.06px;line-height:17px;height:17px;font-size:12.8px;color:#000;font-weight:bold;left:162.90px;">0,2850</div>
<div class="t" style="top:297.06px;line-height:17px;height:17px;font-size:12.8px;color:#000;left:-125.10px;width:400px;text-align:right;">2500</div>
<div class="t" style="top:297.06px;line-height:17px;height:17px;font-size:12.8px;color:#000;left:96.50px;width:400px;text-align:center;">CANT</div>
<div class="abs" style="left:0;top:316.23px;width:159px;height:22.23px;background:#e9e9e9"></div>
<div class="t" style="top:319.04px;line-height:17px;height:17px;font-size:12.8px;color:#000;left:-178.40px;width:400px;text-align:center;">VFIN</div>
<div class="t" style="top:319.04px;line-height:17px;height:17px;font-size:12.8px;color:#000;left:-306.80px;width:400px;text-align:right;">10000</div>
<div class="t" style="top:319.04px;line-height:17px;height:17px;font-size:12.8px;color:#000;font-weight:bold;left:-243.80px;width:400px;text-align:right;">0,0001</div>
<div class="abs" style="left:161px;top:316.23px;width:159px;height:22.23px;background:#e9e9e9"></div>
<div class="t" style="top:319.04px;line-height:17px;height:17px;font-size:12.8px;color:#000;font-weight:bold;left:162.90px;">8,00</div>
<div class="t" style="top:319.04px;line-height:17px;height:17px;font-size:12.8px;color:#000;left:-125.10px;width:400px;text-align:right;">100</div>
<div class="t" style="top:319.04px;line-height:17px;height:17px;font-size:12.8px;color:#000;left:96.50px;width:400px;text-align:center;">MAXM</div>
<div class="abs" style="left:161px;top:338.16px;width:159px;height:22.23px;background:#ffffff"></div>
<div class="t" style="top:341.02px;line-height:17px;height:17px;font-size:12.8px;color:#000;font-weight:bold;left:162.90px;">2.000,05</div>
<div class="t" style="top:341.02px;line-height:17px;height:17px;font-size:12.8px;color:#000;left:-125.10px;width:400px;text-align:right;">1</div>
<div class="t" style="top:341.02px;line-height:17px;height:17px;font-size:12.8px;color:#000;left:96.50px;width:400px;text-align:center;">VFIN</div>
<div class="sep" style="left:15px;top:96.43px;background:rgba(170,170,170,.6)"></div>
<div class="sep" style="left:15px;top:118.36px;background:rgba(170,170,170,.6)"></div>
<div class="sep" style="left:15px;top:140.29px;background:rgba(170,170,170,.6)"></div>
<div class="sep" style="left:15px;top:162.22px;background:rgba(170,170,170,.6)"></div>
<div class="sep" style="left:15px;top:184.15px;background:rgba(170,170,170,.6)"></div>
<div class="sep" style="left:15px;top:206.08px;background:rgba(170,170,170,.6)"></div>
<div class="sep" style="left:15px;top:228.01px;background:rgba(170,170,170,.6)"></div>
<div class="sep" style="left:15px;top:249.94px;background:rgba(170,170,170,.6)"></div>
<div class="sep" style="left:15px;top:271.87px;background:rgba(170,170,170,.6)"></div>
<div class="sep" style="left:15px;top:293.80px;background:rgba(170,170,170,.6)"></div>
<div class="sep" style="left:15px;top:315.73px;background:rgba(170,170,170,.6)"></div>
<div class="sep" style="left:15px;top:337.66px;background:rgba(170,170,170,.6)"></div>
<div class="sep" style="left:15px;top:359.59px;background:rgba(170,170,170,.6)"></div>
<div class="sep" style="left:15px;top:381.52px;background:rgba(170,170,170,.6)"></div>
</div>
<div class="panel" id="trades" style="left:694px;top:308px;width:320px;height:404px"><div class="ph">Trades</div>
<div class="abs" style="left:0;top:31.8px;width:320px;height:23.9px;background:linear-gradient(#3c3c3c,#222 45%,#0c0c0c)"></div>
<div class="abs" style="left:64.7px;top:31.8px;width:1px;height:23.9px;background:linear-gradient(#1a1a1a,#000)"></div>
<div class="abs" style="left:65.7px;top:31.8px;width:1px;height:23.9px;background:linear-gradient(#484848,#262626)"></div>
<div class="abs" style="left:163.3px;top:31.8px;width:1px;height:23.9px;background:linear-gradient(#1a1a1a,#000)"></div>
<div class="abs" style="left:164.3px;top:31.8px;width:1px;height:23.9px;background:linear-gradient(#484848,#262626)"></div>
<div class="abs" style="left:248.0px;top:31.8px;width:1px;height:23.9px;background:linear-gradient(#1a1a1a,#000)"></div>
<div class="abs" style="left:249.0px;top:31.8px;width:1px;height:23.9px;background:linear-gradient(#484848,#262626)"></div>
<div class="t" style="top:35.10px;line-height:17px;height:17px;font-size:13px;color:#fff;font-weight:bold;left:-167.50px;width:400px;text-align:center;">Price</div>
<div class="t" style="top:35.10px;line-height:17px;height:17px;font-size:13px;color:#fff;font-weight:bold;left:-86.50px;width:400px;text-align:center;">Size</div>
<div class="t" style="top:35.10px;line-height:17px;height:17px;font-size:13px;color:#fff;font-weight:bold;left:5.80px;width:400px;text-align:center;">B/?/S %</div>
<div class="t" style="top:35.10px;line-height:17px;height:17px;font-size:13px;color:#fff;font-weight:bold;left:83.80px;width:400px;text-align:center;">Time</div>
<div class="t" style="top:58.36px;line-height:17px;height:17px;font-size:12.8px;color:#000;font-weight:bold;left:4.00px;">0,044</div>
<div class="t" style="top:58.36px;line-height:17px;height:17px;font-size:12.8px;color:#2cb22c;left:-85.50px;width:400px;text-align:center;">200</div>
<div class="abs" style="left:167px;top:55.70px;width:40px;height:21.93px;background:#14c21e"></div>
<div class="abs" style="left:207px;top:55.70px;width:40px;height:21.93px;background:#e5e5e5"></div>
<div class="t" style="top:58.36px;line-height:17px;height:17px;font-size:12.8px;color:#000;left:83.60px;width:400px;text-align:center;">20:04:32</div>
<div class="t" style="top:80.29px;line-height:17px;height:17px;font-size:12.8px;color:#000;font-weight:bold;left:4.00px;">0,044</div>
<div class="t" style="top:80.29px;line-height:17px;height:17px;font-size:12.8px;color:#2cb22c;left:-85.50px;width:400px;text-align:center;">111</div>
<div class="abs" style="left:167px;top:77.63px;width:40px;height:21.93px;background:#14c21e"></div>
<div class="abs" style="left:207px;top:77.63px;width:40px;height:21.93px;background:#e5e5e5"></div>
<div class="t" style="top:80.29px;line-height:17px;height:17px;font-size:12.8px;color:#000;left:83.60px;width:400px;text-align:center;">18:43:44</div>
<div class="sep" style="left:15px;top:77.13px;background:rgba(170,170,170,.6)"></div>
<div class="sep" style="left:15px;top:99.06px;background:rgba(170,170,170,.6)"></div>
<div class="sep" style="left:15px;top:120.99px;background:rgba(170,170,170,.6)"></div>
<div class="sep" style="left:15px;top:142.92px;background:rgba(170,170,170,.6)"></div>
<div class="sep" style="left:15px;top:164.85px;background:rgba(170,170,170,.6)"></div>
<div class="sep" style="left:15px;top:186.78px;background:rgba(170,170,170,.6)"></div>
<div class="sep" style="left:15px;top:208.71px;background:rgba(170,170,170,.6)"></div>
<div class="sep" style="left:15px;top:230.64px;background:rgba(170,170,170,.6)"></div>
<div class="sep" style="left:15px;top:252.57px;background:rgba(170,170,170,.6)"></div>
<div class="sep" style="left:15px;top:274.50px;background:rgba(170,170,170,.6)"></div>
<div class="sep" style="left:15px;top:296.43px;background:rgba(170,170,170,.6)"></div>
<div class="sep" style="left:15px;top:318.36px;background:rgba(170,170,170,.6)"></div>
<div class="sep" style="left:15px;top:340.29px;background:rgba(170,170,170,.6)"></div>
<div class="sep" style="left:15px;top:362.22px;background:rgba(170,170,170,.6)"></div>
<div class="sep" style="left:15px;top:384.15px;background:rgba(170,170,170,.6)"></div>
</div>
<div id="tab">
<svg class="abs" style="left:223px;top:8px" width="26" height="23" viewBox="0 0 26 23"><rect x="1.6" y="1.4" width="22.9" height="14.1" fill="none" stroke="#1a7bee" stroke-width="1"/><rect x="3" y="3" width="20.1" height="10.9" fill="#1a7bee"/><path d="M11 16h5v4.2h5l1.2 1.8H4.6l1.2-1.8h5.2z" fill="#1a7bee"/></svg>
<div class="t" style="top:35.60px;line-height:14px;height:14px;font-size:10.4px;color:#1a7bee;left:36.00px;width:400px;text-align:center;">Streamer</div>
<svg class="abs" style="left:334px;top:10px" width="26" height="18" viewBox="0 0 26 18"><rect x="0" y="0.8" width="25.4" height="16.2" fill="#959595"/><path d="M0.3 0.9L10.9 11.3Q12.8 12.9 14.7 11.3L25.3 0.9M0.3 17L8.2 9.7M25.3 17L17.4 9.7" fill="none" stroke="#000" stroke-width="1.1"/></svg>
<div class="t" style="top:35.60px;line-height:14px;height:14px;font-size:10.4px;color:#959595;left:146.50px;width:400px;text-align:center;">Mailbox</div>
<svg class="abs" style="left:442px;top:2px" width="42" height="32" viewBox="0 0 42 32"><path d="M14.05 4.88L17.04 14.08L26.72 14.08L18.89 19.77L21.88 28.98L14.05 23.29L6.22 28.98L9.21 19.77L1.38 14.08L11.06 14.08Z" fill="#959595"/><circle cx="31.05" cy="10" r="9.05" fill="#f6412f"/><text x="30.9" y="14.2" text-anchor="middle" font-family="Liberation Sans,sans-serif" font-size="12.5" fill="#fff">1</text></svg>
<div class="t" style="top:35.60px;line-height:14px;height:14px;font-size:10.4px;color:#959595;left:256.00px;width:400px;text-align:center;">Favorites</div>
<svg class="abs" style="left:553px;top:7px" width="28" height="25" viewBox="0 0 28 25"><rect x="1.1" y="0.7" width="11.9" height="21.3" rx="1.6" fill="#959595"/><rect x="14.4" y="0.7" width="11.9" height="21.3" rx="1.6" fill="#959595"/><rect x="10" y="0.7" width="7.4" height="21.3" fill="#959595"/><path d="M13.7 1.6V21.2" stroke="#000" stroke-width="0.9"/><path d="M13.7 21.6V23.9" stroke="#959595" stroke-width="1.1"/><rect x="3.2" y="2.9" width="3.9" height="3.9" fill="#000"/><path d="M15.5 3.5H24.1M15.5 6.3H24.1M15.5 8.6H24.1M15.5 11.3H24.1M15.5 13.7H24.1M15.5 16.4H24.1M15.5 18.8H24.1M8 3.5H11.9M8 6.3H11.9M3.2 8.6H11.9M3.2 11.3H11.9M3.2 13.7H11.9M3.2 16.4H11.9M3.2 18.8H11.9" stroke="#000" stroke-width="1.05"/></svg>
<div class="t" style="top:35.60px;line-height:14px;height:14px;font-size:10.4px;color:#959595;left:365.60px;width:400px;text-align:center;">News</div>
<svg class="abs" style="left:664px;top:6px" width="28" height="28" viewBox="0 0 28 28"><rect x="1" y="0.9" width="17.9" height="12.9" fill="#959595"/><rect x="8" y="6.8" width="19.2" height="16.2" fill="#000"/><path d="M9.1 7.9H26.1V21.9H24L23.7 26L19.8 21.9H9.1Z" fill="#959595"/></svg>
<div class="t" style="top:35.60px;line-height:14px;height:14px;font-size:10.4px;color:#959595;left:476.30px;width:400px;text-align:center;">Boards</div>
<svg class="abs" style="left:774px;top:6px" width="27" height="27" viewBox="0 0 27 27"><circle cx="13.25" cy="13.15" r="12.55" fill="#959595"/><text x="13.1" y="19.7" text-anchor="middle" font-family="Liberation Sans,sans-serif" font-size="17.5" fill="#000">?</text></svg>
<div class="t" style="top:35.60px;line-height:14px;height:14px;font-size:10.4px;color:#959595;left:586.60px;width:400px;text-align:center;">About</div>
</div>
</div></body></html>
